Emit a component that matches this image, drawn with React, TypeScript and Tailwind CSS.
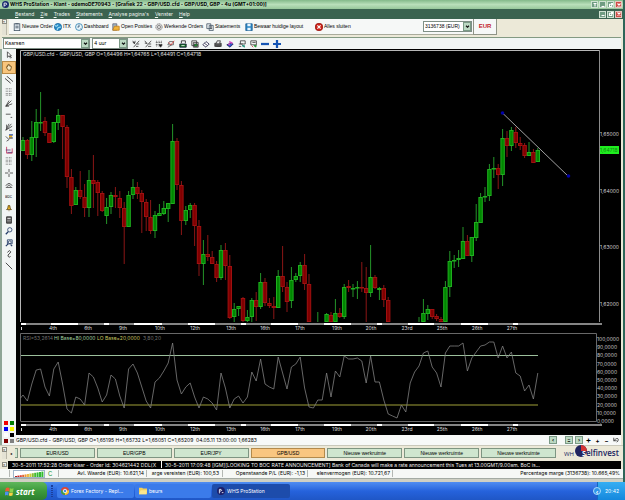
import type { ReactNode } from "react";

type Candle = [number, number, number, number, number, "g" | "r"];

// index, high, body top, body bottom, low, direction
const candles: Candle[] = [
  [0,137,140,151,151,"g"],[1,139,140,155,159,"r"],[2,121,137,155,161,"g"],[3,109,122,138,157,"g"],
  [4,92,122,123,131,"g"],[5,117,121,133,136,"r"],[6,133,133,143,143,"r"],[7,122,122,142,143,"g"],
  [8,109,115,123,130,"g"],[9,115,115,127,159,"r"],[10,125,127,177,188,"r"],[11,169,177,206,214,"r"],
  [12,187,190,205,205,"g"],[13,171,190,197,199,"r"],[14,184,197,208,217,"r"],[15,170,180,208,217,"g"],
  [16,155,180,184,208,"r"],[17,180,182,193,216,"r"],[18,191,193,211,212,"r"],[19,198,207,216,224,"g"],
  [20,192,195,207,214,"g"],[21,187,195,197,208,"r"],[22,191,198,208,218,"r"],[23,202,208,227,264,"r"],
  [24,191,195,227,227,"g"],[25,179,187,195,199,"g"],[26,182,187,194,199,"r"],[27,190,193,202,233,"r"],
  [28,199,202,217,231,"r"],[29,200,217,231,234,"r"],[30,211,215,231,238,"g"],[31,204,213,216,216,"g"],
  [32,201,208,214,215,"g"],[33,203,203,209,222,"g"],[34,124,141,204,204,"g"],[35,138,141,185,190,"r"],
  [36,181,185,221,235,"r"],[37,206,210,221,225,"g"],[38,203,205,210,218,"g"],[39,203,205,226,246,"r"],
  [40,220,226,264,276,"r"],[41,240,254,264,285,"g"],[42,235,254,257,261,"r"],[43,251,257,264,264,"r"],
  [44,261,264,278,282,"r"],[45,245,250,278,280,"g"],[46,243,250,266,280,"r"],[47,255,266,318,319,"r"],
  [48,303,309,317,322,"g"],[49,306,306,309,316,"g"],[50,297,298,321,322,"r"],[51,310,317,321,322,"g"],
  [52,298,300,317,322,"g"],[53,292,300,307,321,"r"],[54,273,282,307,309,"g"],[55,278,282,303,306,"r"],
  [56,298,303,306,308,"r"],[57,297,306,308,319,"r"],[58,270,276,308,308,"g"],[59,246,276,287,292,"r"],
  [60,282,287,302,312,"r"],[61,267,280,301,308,"g"],[62,273,276,280,282,"g"],[63,262,265,276,282,"g"],
  [64,254,265,284,290,"r"],[65,274,284,322,322,"r"],[67,312,322,322,322,"g"],[69,313,314,322,322,"g"],
  [70,312,315,322,322,"r"],[71,299,313,322,322,"g"],[72,308,313,317,318,"r"],[73,284,287,317,319,"g"],
  [74,280,286,288,292,"r"],[75,284,288,289,297,"g"],[76,281,287,288,299,"g"],[77,262,287,288,292,"r"],
  [78,267,288,293,322,"r"],[79,245,277,293,297,"g"],[80,275,277,288,289,"r"],[81,287,288,290,300,"g"],
  [82,285,288,300,307,"r"],[83,297,300,322,322,"r"],[90,317,322,322,322,"g"],[91,299,313,322,322,"g"],
  [92,305,309,314,320,"g"],[93,309,309,317,319,"r"],[94,314,316,319,321,"r"],[95,317,319,322,322,"r"],
  [96,281,287,322,322,"g"],[97,251,261,287,297,"g"],[98,255,260,261,268,"g"],[99,250,258,260,267,"g"],
  [100,227,241,259,259,"g"],[101,235,241,256,256,"r"],[102,237,237,256,262,"g"],[103,204,222,238,241,"g"],
  [104,193,197,223,223,"g"],[105,187,196,197,202,"g"],[106,164,169,196,201,"g"],[107,157,168,169,178,"g"],
  [108,164,168,175,189,"r"],[109,129,138,175,186,"g"],[110,131,138,146,157,"r"],[111,127,130,146,151,"g"],
  [112,127,132,143,148,"r"],[113,137,143,146,150,"r"],[114,143,145,156,158,"r"],[115,142,152,156,156,"g"],
  [116,149,152,163,163,"r"],[117,148,150,162,162,"g"],
];

const rsi = [
  395,401,384,370,369,387,396,369,362,384,409,413,397,399,405,373,377,388,402,395,375,379,396,408,369,364,373,387,401,408,382,
  378,371,363,343,380,394,387,383,397,408,397,399,403,410,373,388,408,399,396,403,397,372,381,359,384,387,389,357,373,389,367,
  364,357,388,407,408,400,400,373,397,371,377,356,359,359,358,361,383,356,382,382,400,414,416,418,405,412,383,372,366,353,351,
  367,373,387,353,346,346,346,343,371,358,352,346,345,342,342,358,346,358,352,373,376,391,385,399,373,
];

const xAt = (i: number) => 23 + 4.4 * i;

const days: [string, number][] = [
  ["4th",53],["6th",88],["9th",123],["10th",160],["12th",195],["13th",231],["16th",265],
  ["17th",300],["19th",337],["20th",371],["23rd",407],["25th",442],["26th",477],["27th",512],
];
const marks: [number, number][] = [
  [21,5],[51,27],[104,5],[134,28],[188,27],[241,5],[271,27],[324,27],[377,5],[408,26],[461,27],[513,5],
];

function Ruler({ y }: { y: number }) {
  return (
    <g>
      <rect x="21" y={y} width="581" height="2" fill="#858585" />
      {marks.map(([x, w]) => (
        <rect key={x} x={x} y={y} width={w} height="2" fill="#fff" />
      ))}
      <rect x="21" y={y + 4} width="1" height="3" fill="#ddd" />
      {days.map(([d, x]) => (
        <text key={d} x={x} y={y + 7} textAnchor="middle" fill="#ddd">{d}</text>
      ))}
    </g>
  );
}

function Chart() {
  return (
    <svg
      viewBox="16 49 605 386"
      className="block w-full bg-black font-[Inter,sans-serif] text-[5px]"
      role="img"
      aria-label="GBP/USD 4 uur"
    >
      <path d="M20.5 322V50.5H599" fill="none" stroke="#b8b8b8" />
      <path d="M599.5 50V322" stroke="#8c8c8c" />
      <text x="23" y="56" fill="#e0e0e0">
        GBP/USD.cfd - GBP/USD, GBP O=1,64496 H=1,64765 L=1,64491 C=1,64718
      </text>
      {candles.map(([i, hi, top, bottom, low, dir]) => {
        const x = xAt(i);
        const up = dir === "g";
        return (
          <g key={i}>
            <rect x={x - 0.5} y={hi} width="1" height={Math.max(1, low - hi)} fill={up ? "#249428" : "#8a1616"} />
            {top < 322 && (
              <rect
                x={x - 1.7}
                y={top + 0.5}
                width="3.4"
                height={Math.max(0.5, bottom - top - 1)}
                fill={up ? "#008600" : "#800000"}
                stroke={up ? "#1fae1f" : "#a01010"}
              />
            )}
          </g>
        );
      })}
      <path d="M503 113.500L568 176" stroke="#c9c9c9" strokeWidth="0.8" />
      <circle cx="502.500" cy="113" r="1.800" fill="#0000a8" />
      <circle cx="568.500" cy="176" r="1.800" fill="#0000a8" />
      <g fill="#d0d0d0">
        {["1,65000", "1,64000", "1,63000", "1,62000"].map((t, i) => (
          <text key={t} x="600" y={136 + Math.round(i * 56.5)}>{t}</text>
        ))}
      </g>
      <rect x="600" y="146" width="19" height="8" fill="#1fee1f" />
      <text x="600" y="152" fill="#168416">1,64718</text>
      <Ruler y={323} />

      <path d="M20.500 421V333.500H596.500V421.500H20.500" fill="none" stroke="#686868" />
      <text y="340">
        <tspan x="23" fill="#707070">RSI=53,2614</tspan>
        <tspan x="54" fill="#a5d8a5">HI Base=80,0000</tspan>
        <tspan x="97" fill="#c8c860">LO Base=20,0000</tspan>
        <tspan x="143" fill="#707070">3,80,20</tspan>
      </text>
      <rect x="21" y="355" width="517" height="1" fill="#9cbf9c" />
      <rect x="21" y="404" width="517" height="2" fill="#50501c" />
      <polyline
        points={"20.5,398 " + rsi.map((y, i) => `${xAt(i)},${y}`).join(" ")}
        fill="none"
        stroke="#808080"
        strokeWidth="0.8"
      />
      <g fill="#c8c8c8">
        {[100, 90, 80, 70, 60, 50, 40, 30, 20, 10, 0].map((v, i) => (
          <text key={v} x="597" y={341 + Math.round(i * 8.2)}>{v},0000</text>
        ))}
      </g>
      <Ruler y={424} />
    </svg>
  );
}

const Icon = ({ children }: { children: ReactNode }) => (
  <svg viewBox="0 0 10 10" className="block size-2 shrink-0" fill="none" stroke="#3a3a3a" strokeWidth="1" aria-hidden="true">
    {children}
  </svg>
);

const glyphs = {
  clipboard: <><rect x="1.5" y="1" width="7" height="8.500" fill="#e9f1f7" stroke="#456" /><path d="M3 1h4M3 4h4M3 6h4" stroke="#345" /></>,
  globe: <><circle cx="5" cy="5" r="4.500" fill="#258ac6" stroke="#1a6ba5" /><path d="M1 3q3 2 4-1M4 9q0-4 5-4" stroke="#a4e0f5" strokeWidth="1.500" /></>,
  clock: <><circle cx="5" cy="5" r="4.300" fill="#e7f5fb" stroke="#2c7fae" /><path d="M5 2v3H3M7 7l1 1" stroke="#246" /></>,
  folder: <><path d="M1 9V1h5v8z" fill="#9db7cb" stroke="#667" /><path d="M3 4h6v5H1z" fill="#f0b53c" stroke="#c17f18" /></>,
  gear: <><circle cx="5" cy="5" r="4" fill="#ddd" stroke="#777" strokeDasharray="2 .6" /><circle cx="5" cy="5" r="2" stroke="#777" /></>,
  docs: <><path d="M1 1h5v6H1zM4 3h5v6.500H4z" fill="#eef2f5" stroke="#456" /><path d="M5.500 5h2M5.500 7h2" /></>,
  disk: <><path d="M1 1h8v8.500H1z" fill="#2b87c4" stroke="#1d5d92" /><path d="M3 1h4v3H3zM3 6h4v3H3z" fill="#e8f6ff" stroke="none" /></>,
  close: <><circle cx="5" cy="5" r="4.700" fill="#cf2218" stroke="#971610" /><path d="M3 3l4 4M7 3L3 7" stroke="#fff" strokeWidth="1.500" /></>,
};

const actions: [string, keyof typeof glyphs, string][] = [
  ["Nieuwe Order", "clipboard", "w-[41px]"],
  ["ITX", "globe", "w-[21px]"],
  ["Dashboard", "clock", "w-[37px]"],
  ["Open Posities", "folder", "w-[43px]"],
  ["Werkende Orders", "gear", "w-[51px]"],
  ["Statements", "docs", "w-[39px]"],
  ["Bewaar huidige layout", "disk", "w-[70px]"],
  ["Alles sluiten", "close", "w-[41px]"],
];

const chartTools: [string, ReactNode][] = [
  ["Indicator", <path d="M1 3h3M5 8h3M9 1L2 9M1 1l2 4 1-4M6 5h3" />],
  ["Indicator instellen", <path d="M1 4h3M5 8h4M9 1L2 9M1 1l3 4M6 5h3" />],
  ["Raster", <><path d="M2 1v8M5 1v8M1 3h8M1 6h8M8 1v5" strokeDasharray="1 1" /><path d="M5 6h4L7 9z" fill="#111" /></>],
  ["Tekenen", <><path d="M1 6h7V2H3zM1 9l5-3" stroke="#555" /><path d="M2 3l3 3 4-5" stroke="#d33" /></>],
  ["Sjabloon", <><path d="M1 5h8v4H1z" fill="#167b26" stroke="#113" /><path d="M3 4V1h5v3" stroke="#222" /><path d="M3 7h4" stroke="#fff" /></>],
  ["Venster", <><path d="M1 1h6v6H1zM3 3h6v6H3z" fill="#eee" /><path d="M4 5h4v3H4z" fill="#1a9b30" /></>],
  ["Wissen", <path d="M1 6l4-4 4 3-4 4zM3 4l4 3" fill="#fff" stroke="#224" />],
  ["Afdrukken", <><path d="M1 4h8v4H1z" fill="#555" /><path d="M3 4l1-3h4L7 4M3 8h5" fill="#eee" /></>],
  ["Kleuren", <><path d="M1 6l4 3 4-4-3-1z" fill="#2854cf" stroke="#225" /><path d="M4 2l4 2M3 5l2 1" stroke="#d44cc4" strokeWidth="2" /></>],
  ["Volgende", <><path d="M3 1h6v4H3zM1 5h5M1 8h3" /><path d="M5 7h3v2z" fill="#2b8" stroke="#287" /></>],
  ["Vorige", <><path d="M1 1h7v5H1zM3 3h4" /><path d="M5 7h3L7 9z" fill="#2a3" stroke="#283" /><path d="M2 7l2 2" stroke="#c33" /></>],
  ["Uitzoomen", <path d="M0 5h10" stroke="#1555b4" strokeWidth="2.800" />],
  ["Inzoomen", <path d="M0 5h10M5 0v10" stroke="#1555b4" strokeWidth="2.800" />],
];

const drawTools: [string, ReactNode][] = [
  ["Selecteren", <path d="M3 1v7l2-2 2 3 1-1-2-2h2z" fill="#fff" />],
  ["Verplaatsen", <path d="M2 6q-1-2 1-1V3q1-1 1 0V2q1-1 1 0v1q1-1 1 0v1q2-1 2 1L7 9H4z" fill="#f8e9c2" stroke="#6b4a14" />],
  ["Parallelle lijnen", <path d="M0 3l7 6M2 0l8 7" stroke="#222" />],
  ["Fibonacci", <path d="M1 1h8M1 4h8M1 7h8M1 9h8" strokeDasharray="1 1" />],
  ["Waaier", <path d="M1 9l7-7M1 9l8-3M1 9l4-7M1 9h4" />],
  ["Horizontale lijn", <path d="M1 4h6M7 8h2" />],
  ["Gann", <path d="M1 9L8 1M1 9l8-5M1 9l4-8M2 2v5M5 9h4" />],
  ["Kleurvlak", <><path d="M1 3l4 4-3 2" /><path d="M5 1h4v5H5z" fill="#eeb21e" stroke="none" /><path d="M5 5h5M5 1h5" stroke="#3155b8" strokeWidth="1.500" /></>],
  ["Niveaus", <><path d="M2 1v8h7V3" stroke="#c12c55" /><path d="M1 5h6M3 8h6" stroke="#537" /></>],
  ["Stippelraster", <path d="M1 1h8M1 4h8M1 6h8M1 9h8" strokeDasharray="1 1" />],
  ["Kruis", <path d="M5 0v4M5 6v4M0 5h4M6 5h4" />],
  ["Bogen", <path d="M1 6q4-6 8 0M3 7q2-4 4 0M1 8h8" />],
  ["Tekst", <text x="0" y="7" fontSize="5" fill="#222" stroke="none">abc</text>],
  ["Alarm", <path d="M2 7q2-1 2-5h2q0 4 2 5zM5 8v1" fill="#edb62a" stroke="#5b4410" />],
  ["Rekenmachine", <><path d="M2 1h6v8H2z" fill="#666" stroke="#222" /><path d="M3 3h4" stroke="#fff" /><path d="M3 6h4" stroke="#ccc" strokeDasharray="1 .5" /></>],
  ["Zoeken", <><circle cx="6" cy="3.500" r="2.700" stroke="#223a66" /><path d="M4 6L1 9" stroke="#223a66" strokeWidth="1.600" /></>],
  ["Zoom gebied", <><path d="M3 1h6v5H3z" stroke="#223a66" /><circle cx="6" cy="4" r="1.800" stroke="#223a66" /><path d="M4 6L1 9M7 7l2 2" stroke="#223a66" strokeWidth="1.400" /></>],
  ["Golf", <path d="M3 3q3-4 4-1 0 2-2 3T4 8q1 2 3 0" stroke="#222" />],
  ["Lijn", <path d="M1 1l8 8" stroke="#222" />],
];

const swatches = ["bg-[#f00000]", "bg-[#008000]", "bg-[#0000f0]", "bg-[#f5f500]", "bg-white", "bg-black", "bg-[#800000]", "bg-[#808080]"];

const Chevron = () => (
  <span className="pointer-events-none absolute top-px right-px bottom-px flex w-2 items-center justify-center border border-[#7b9a86] bg-[#bcd9c3]">
    <svg viewBox="0 0 6 4" className="h-[3px] w-[5px]" fill="none" stroke="#111" strokeWidth="1.500" aria-hidden="true">
      <path d="M1 1l2 2 2-2" />
    </svg>
  </span>
);

function Picker({ label, value, width }: { label: string; value: string; width: string }) {
  return (
    <label className={`relative block ${width}`}>
      <select aria-label={label} className="block h-[11px] w-full appearance-none border border-[#7f8f86] bg-white pl-px text-[5px] leading-[9px]">
        <option>{value}</option>
      </select>
      <Chevron />
    </label>
  );
}

function WindowButtons({ count }: { count: number }) {
  const kinds = [
    ["Vastzetten", "M2 2h4M4 2v4"],
    ["Minimaliseren", "M2 6h4"],
    ["Herstellen", "M2 3h3v3H2zM4 2h2v2"],
    ["Sluiten", "M2 2l4 4M6 2L2 6"],
  ].slice(4 - count);
  return (
    <div className="flex gap-px">
      {kinds.map(([name, d]) => (
        <button
          key={name}
          aria-label={name}
          className={`flex size-[7px] items-center justify-center border ${name === "Sluiten" ? "border-[#e6c6c0] bg-[#cf4a44] text-white" : "border-[#cfe2d2] bg-[#6f9c82] text-white"}`}
        >
          <svg viewBox="0 0 8 8" className="size-[6px] shrink-0" fill="none" stroke="currentColor" strokeWidth="1.500" aria-hidden="true">
            <path d={d} />
          </svg>
        </button>
      ))}
    </div>
  );
}

const Grip = () => (
  <div className="flex w-[5px] shrink-0 flex-col items-center border-r border-[#b9b7a8] bg-[#e4e2d4]">
    <button aria-label="Balk sluiten" className="size-[5px] border border-[#8d8d84] bg-[#f4f3ea] text-[4px] leading-[2px]">×</button>
  </div>
);

const Divider = () => <span className="h-[7px] w-px shrink-0 bg-[#b4b8b4]" />;

const workspaces = ["EUR/USD", "EUR/GPB", "EUR/JPY", "GPB/USD", "Nieuwe werkruimte", "Nieuwe werkruimte", "Nieuwe werkruimte"];

export default function App() {
  return (
    <div className="flex min-h-screen flex-col bg-[#ece9d8] font-[Inter,Arial,sans-serif] text-[5px] leading-[7px] whitespace-nowrap text-black">
      <div className="flex flex-1 flex-col border-r-2 border-[#2f6659]">
        <header>
          <div className="flex h-[9px] items-center justify-between bg-linear-to-b from-[#84b98a] via-[#b9dfba] to-[#98c79b] pr-px pl-[2px]">
            <div className="flex items-center gap-px">
              <svg viewBox="0 0 10 10" className="size-[7px]" aria-hidden="true">
                <circle cx="5" cy="5" r="5" fill="#1b2b6e" />
                <path d="M3 8V3h3q2 2-1 3H3" fill="none" stroke="#fff" strokeWidth="1.200" />
              </svg>
              <h1 className="text-[5px] font-bold">
                WHS ProStation - Klant - odemoDE70943 - [Grafiek 22 - GBP/USD.cfd - GBP/USD, GBP - 4u (GMT+01:00)]
              </h1>
            </div>
            <WindowButtons count={4} />
          </div>
          <nav className="flex h-[10px] items-center justify-between bg-[#3b6350] pr-px pl-[15px] text-[#eef5ef]">
            <div className="flex gap-[6px]">
              {["Bestand", "Zie", "Trades", "Statements", "Analyse pagina's", "Venster", "Help"].map((m) => (
                <button key={m}><span className="underline">{m[0]}</span>{m.slice(1)}</button>
              ))}
            </div>
            <WindowButtons count={3} />
          </nav>
          <div className="flex h-[16px] pl-[2px] font-['Liberation_Sans',Arial,sans-serif]">
            <Grip />
            <div className="ml-[2px] flex flex-1 items-center border-b border-[#a9ab9c] bg-[#f6f8f7] pl-1">
              {actions.map(([name, icon, width]) => (
                <button key={name} className={`flex shrink-0 items-center gap-px text-left ${width}`}>
                  <Icon>{glyphs[icon]}</Icon>
                  {name}
                </button>
              ))}
              <div className="ml-auto pr-px"><Picker label="Rekening" value="3136738 (EUR)" width="w-[49px]" /></div>
            </div>
            <div className="flex w-[24px] items-center justify-center border-r border-b border-l border-[#8f9487] bg-[#f6f8f7] text-[6px] font-bold text-[#c3202a]">EUR</div>
            <div className="w-[126px]" />
          </div>
          <div className="h-[2px] bg-[#ece9d8]" />
          <div className="mr-[2px] ml-[2px] flex h-[12px] items-center gap-[2px] border-t border-[#839a83] bg-[#f1f5f4] pl-px">
            <Picker label="Grafiektype" value="Kaarsen" width="w-[87px]" />
            <Picker label="Interval" value="4 uur" width="w-[36px]" />
            <div className="flex w-[153px]">
              {chartTools.map(([name, art]) => (
                <button key={name} aria-label={name} className="flex flex-1 justify-center"><Icon>{art}</Icon></button>
              ))}
            </div>
          </div>
        </header>

        <main className="flex pr-[2px]">
          <aside className="flex w-4 shrink-0 flex-col justify-between border-l-2 border-[#8fa596] bg-[#f1f5f4] pb-[2px]">
            <div className="flex h-[223px] flex-col">
              {drawTools.map(([name, art]) => (
                <button
                  key={name}
                  aria-label={name}
                  className={`flex flex-1 items-center justify-center ${name === "Verplaatsen" ? "border border-[#b98a45] bg-[#f8c57c]" : ""}`}
                >
                  <Icon>{art}</Icon>
                </button>
              ))}
            </div>
            <div className="ml-[2px] grid w-[10px] grid-cols-2 gap-[2px]">
              {swatches.map((c) => (
                <button key={c} aria-label="Kleur" className={`size-1 ${c}`} />
              ))}
            </div>
          </aside>
          <section className="min-w-0 flex-1">
            <Chart />
            <div className="flex h-[10px] items-center justify-between bg-[#f7f9f8] pr-[2px]">
              <span>GBP/USD.cfd - GBP/USD, GBP O=1,65195 H=1,65732 L=1,65051 C=1,65209&nbsp; 04.05.11 13:00:00 1,66283</span>
              <div className="flex items-center gap-[2px] font-bold">
                <button aria-label="Terug" className="h-2 w-[8px] border border-[#7b9a86] bg-[#bcd9c3] leading-[5px]">‹</button>
                <button aria-label="Positie" className="ml-[6px] h-2 w-[8px] border border-[#7b9a86] bg-[#bcd9c3] leading-[4px]">=</button>
                <button aria-label="Vooruit" className="h-2 w-[8px] border border-[#7b9a86] bg-[#bcd9c3] leading-[5px]">›</button>
                <button className="w-[7px] text-[8px]">+</button>
                <button className="w-[7px] text-[6px]">+</button>
                <button className="w-[7px] text-[6px]">−</button>
                <button aria-label="Ongedaan maken" className="flex w-[7px] justify-center">
                  <svg viewBox="0 0 8 8" className="size-[6px]" fill="none" stroke="#222" aria-hidden="true"><path d="M1 1v4h4M1 5q5-5 6-2 0 3-2 4" /></svg>
                </button>
              </div>
            </div>
          </section>
        </main>

        <footer>
          <div className="flex h-[15px] items-center border-t border-[#c9c8ba] pr-[2px]">
            <div className="ml-[2px] flex h-3"><Grip /></div>
            <button aria-label="Vorige werkruimte" className="w-[8px] text-[4px]">◂</button>
            <span className="mr-[2px] h-[10px] w-[3px] border border-l-0 border-[#7e9582] bg-[#cfe6cf]" />
            <div className="grid flex-1 grid-cols-7 gap-[2px] text-center font-['Liberation_Sans',Arial,sans-serif]">
              {workspaces.map((w, i) => (
                <button key={i} className={`h-[10px] border text-[5px] leading-[7px] ${i === 3 ? "border-[#b38a4c] bg-[#f9c681]" : "border-[#7e9582] bg-[#cfe6cf]"}`}>{w}</button>
              ))}
            </div>
            <div className="ml-[8px] flex w-[57px] items-end font-['Open_Sans',sans-serif] text-[#20245f]">
              <span className="w-[11px] text-[6px] leading-[8px]">WH</span>
              <span className="relative text-[8px] leading-[10px] font-semibold">
                <svg viewBox="0 0 12 12" className="absolute -top-[3px] left-0 size-[12px]" aria-hidden="true">
                  <circle cx="6" cy="6" r="6" fill="#20245f" />
                  <path d="M6 6V0a6 6 0 0 1 6 6z" fill="#d43333" />
                </svg>
                <span className="relative pl-[7px]"><span className="text-white">s</span>elfinvest</span>
              </span>
            </div>
          </div>
          <div className="flex h-[9px] items-center pr-[2px] pl-[2px]">
            <Grip />
            <div className="ml-px flex min-w-0 flex-1 items-center bg-black pl-[4px] leading-[8px] text-[#f0f0f0]">
              <span className="w-[148px] overflow-hidden">30-5-2011 17:52:28 Order klaar - Order Id: 304621442 DDL(X</span>
              <span className="mx-px h-[7px] w-px bg-white" />
              <span className="pl-[2px]">30-5-2011 17:09:48 [IGM][LOOKING TO BOC RATE ANNOUNCEMENT] Bank of Canada will make a rate announcement this Tues at 13.00GMT/9.00am. BoC is...</span>
            </div>
          </div>
          <div className="flex h-[10px] items-center border-b border-[#a4aba4] bg-[#f6f8f6] pr-[3px] pl-[9px]">
            <Divider />
            <svg viewBox="0 0 32 8" className="ml-[3px] h-[8px] w-[32px]" aria-hidden="true">
              <rect x=".5" y=".5" width="31" height="7" fill="#fff" stroke="#9fb4c9" />
              {["#a22", "#c22", "#d43", "#d63", "#e93", "#eb4", "#cc3", "#8b3", "#4b3", "#3b3", "#3b3", "#3b3"].map((c, i) => (
                <rect key={i} x={2 + i * 2.4} y={6 - i * 0.4} width="2" height={1 + i * 0.4} fill={c} />
              ))}
            </svg>
            <span className="w-[13px] pl-[3px] text-[6px] text-[#1c9a3b]">C</span>
            <Divider />
            <span className="w-[87px] pr-[2px] text-right">Avl. Waarde (EUR): 10.621,14</span>
            <Divider />
            <span className="w-[75px] pr-[3px] text-right">arge vereisten (EUR): 100,53</span>
            <Divider />
            <span className="w-[84px] pr-[2px] text-right">Openstaande P/L (EUR): -1,13</span>
            <Divider />
            <span className="w-[84px] pr-[2px] text-right">elenvermogen (EUR): 10.721,67</span>
            <Divider />
            <span className="ml-auto">Percentage marge (3136738): 10.665,49%</span>
          </div>
        </footer>
        <div className="flex-1 bg-[#cfd0c4]" />
      </div>

      <div className="flex h-[18px] items-center bg-linear-to-b from-[#4f8df2] via-[#2663dc] to-[#1f56c6] text-white">
        <button className="flex h-full w-[47px] items-center gap-[2px] rounded-r-[5px] bg-linear-to-b from-[#5fb75b] via-[#3c9a3b] to-[#2d7f2f] pl-[5px] font-['Open_Sans',sans-serif] text-[8px] font-bold italic">
          <svg viewBox="0 0 10 10" className="size-[9px]" aria-hidden="true">
            <path d="M1 1q2-1 4 0v4Q3 4 0 5z" fill="#ee5a32" />
            <path d="M5.500 1.500q2 1 4 0L9 5.500q-2 1-4 0z" fill="#8bd04b" />
            <path d="M0 5.500q2-1 4 0l-.5 4q-2-1-3.500 0z" fill="#4c8fee" />
            <path d="M4.800 6q2 1 4 0l-.5 3.500q-2 1-4 0z" fill="#f8d243" />
          </svg>
          start
        </button>
        <span className="mx-1 h-[12px] w-[2px] border-x border-dotted border-[#1b3f9c]" />
        <button className="flex h-[14px] w-[77px] items-center gap-[2px] rounded-[2px] bg-[#3b7bea] pl-[4px]">
          <svg viewBox="0 0 10 10" className="size-2" aria-hidden="true">
            <circle cx="5" cy="5" r="5" fill="#dc4635" />
            <path d="M5 5L0 4a5 5 0 0 0 5 6z" fill="#3ba04d" />
            <path d="M5 5v5a5 5 0 0 0 5-6z" fill="#f4c92e" />
            <circle cx="5" cy="5" r="2.200" fill="#4689ec" stroke="#fff" />
          </svg>
          Forex Factory - Repl...
        </button>
        <button className="ml-px flex h-[14px] w-[76px] items-center gap-[2px] rounded-[2px] bg-[#3b7bea] pl-[4px]">
          <svg viewBox="0 0 10 10" className="size-2" aria-hidden="true"><path d="M0 1h4l1 1h5v7H0z" fill="#f2cf5b" /><path d="M2 4h8L9 9H0z" fill="#fbe68e" /></svg>
          beurs
        </button>
        <button className="ml-px flex h-[14px] w-[78px] items-center gap-[2px] rounded-[2px] bg-[#1d4cab] pl-[5px]">
          <svg viewBox="0 0 10 10" className="size-2" aria-hidden="true"><circle cx="5" cy="5" r="5" fill="#1b1f6b" /><path d="M3 8V3h2q2 1 0 2H3M6 7h2" fill="none" stroke="#fff" /></svg>
          WHS ProStation
        </button>
        <div className="ml-auto flex h-full items-center">
          <button aria-label="Verborgen pictogrammen" className="relative z-10 -mr-1 size-[8px] rounded-full border border-[#a9dcfb] bg-[#2f95ea] text-[6px] leading-[5px] font-bold">‹</button>
          <div className="flex h-full w-[28px] items-center justify-end border-l border-[#1567c0] bg-linear-to-b from-[#35aef3] to-[#1488dd] pr-[6px]">
            <span>20:42</span>
          </div>
        </div>
      </div>
    </div>
  );
}
